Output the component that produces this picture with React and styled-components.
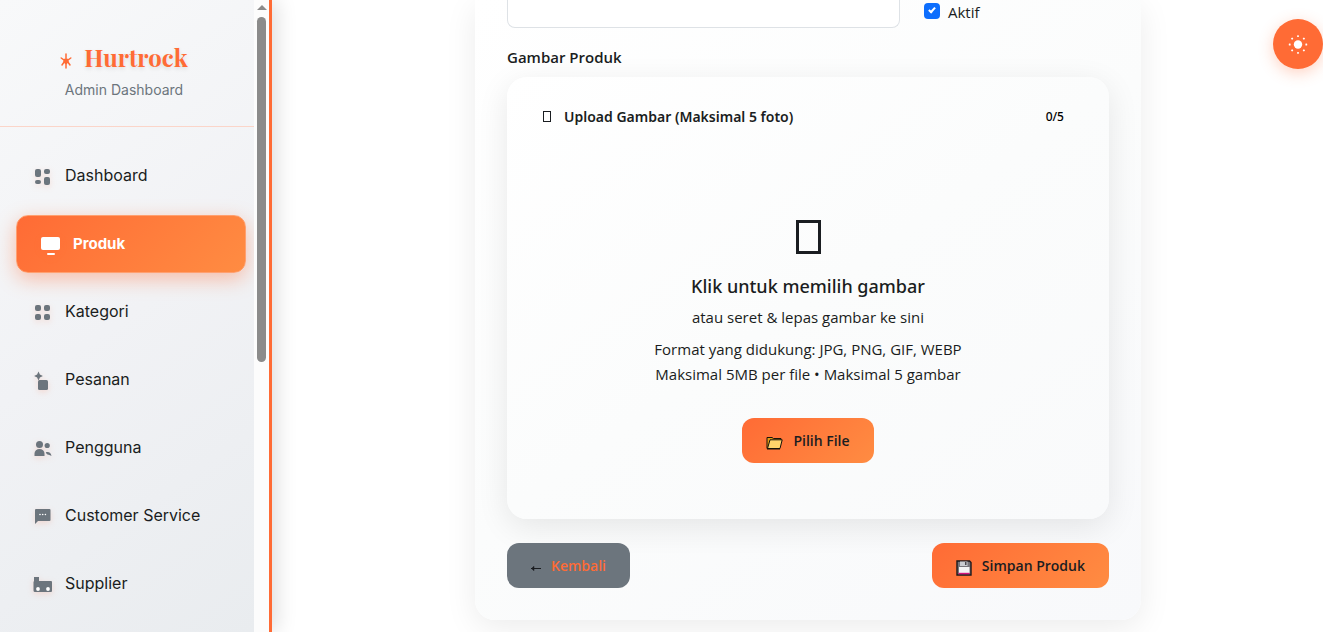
import React from "react";
import styled, { createGlobalStyle } from "styled-components";

const GlobalStyle = createGlobalStyle`
  *, *::before, *::after { box-sizing: border-box; }
  body {
    margin: 0;
    background: #fff;
    color: #1a1d21;
    font-family: "Open Sans", "Noto Sans", sans-serif;
    font-size: 15px;
  }
`;

const Page = styled.div`
  display: flex;
  min-height: 100vh;
`;

const Sidebar = styled.aside`
  position: sticky;
  top: 0;
  display: flex;
  flex: none;
  width: 272px;
  height: 100vh;
  overflow: visible;
  border-right: 3px solid #ff6b35;
  box-shadow: 4px 0 20px rgba(0, 0, 0, 0.14);
  font-family: Inter, sans-serif;
`;

const SidebarContent = styled.div`
  flex: 1;
  overflow: hidden;
  background: linear-gradient(145deg, #f8f9fa 0%, #f1f2f5 50%, #e9ecef 100%);
`;

const Brand = styled.header`
  display: flex;
  flex-direction: column;
  align-items: center;
  gap: 2px;
  height: 127px;
  padding: 38px 6px 0 0;
  border-bottom: 1px solid #fbd5c9;
`;

const BrandName = styled.h1`
  display: flex;
  align-items: center;
  gap: 12px;
  margin: 0;
  color: #ff6b35;
  font-family: "Playfair Display", "Liberation Serif", serif;
  font-size: 24px;
  font-weight: 700;
  line-height: 38px;
  text-shadow: 0 2px 4px rgba(0, 0, 0, 0.1);

  svg {
    position: relative;
    top: 4px;
  }
`;

const BrandCaption = styled.p`
  margin: 0;
  color: #6c757d;
  font-size: 14px;
  line-height: 24px;
`;

const Nav = styled.nav`
  display: flex;
  flex-direction: column;
  gap: 10px;
  padding: 20px 8px 20px 16px;
`;

const NavLink = styled.a`
  display: flex;
  align-items: center;
  gap: 12px;
  height: 58px;
  padding: 0 ${(p) => (p.$active ? "24px" : "16px")} 2px;
  border: 1px solid ${(p) => (p.$active ? "#ffa070" : "transparent")};
  border-radius: 12px;
  background: ${(p) => (p.$active ? "linear-gradient(135deg, #ff6b35, #ff8c42)" : "none")};
  box-shadow: ${(p) => (p.$active ? "0 6px 20px rgba(255, 107, 53, 0.4)" : "none")};
  color: ${(p) => (p.$active ? "#fff" : "#1a1d21")};
  font-size: ${(p) => (p.$active ? "15px" : "16px")};
  font-weight: ${(p) => (p.$active ? 700 : 400)};
  text-decoration: none;

  svg {
    position: relative;
    top: 2px;
    flex: none;
    color: ${(p) => (p.$active ? "#fff" : "#6c757d")};
    filter: drop-shadow(0 2px 3px rgba(255, 107, 53, 0.18));
  }
`;

const ScrollTrack = styled.div`
  display: flex;
  flex: none;
  flex-direction: column;
  align-items: center;
  gap: 7px;
  width: 15px;
  padding-top: 5px;
  background: #fcfcfc;
`;

const ScrollArrow = styled.span`
  border: 5px solid transparent;
  border-top: 0;
  border-bottom-color: #8b8b8b;
`;

const ScrollThumb = styled.span`
  width: 9px;
  height: 345px;
  border-radius: 5px;
  background: #8b8b8b;
`;

const Main = styled.main`
  display: flex;
  flex: 1;
  justify-content: center;
  align-items: flex-start;
  min-width: 0;
  padding: 0 0 12px 21px;
`;

const FormCard = styled.form`
  width: 100%;
  max-width: 666px;
  padding: 0 32px 32px;
  border-radius: 0 0 20px 20px;
  background: linear-gradient(145deg, #fff 0%, #fbfcfc 50%, #f8f9fb 100%);
  box-shadow: 0 8px 32px rgba(0, 0, 0, 0.08);
`;

const FieldRow = styled.div`
  display: grid;
  grid-template-columns: 393px 1fr;
  gap: 24px;
`;

const Description = styled.textarea`
  display: block;
  width: 100%;
  height: 28px;
  padding: 0 12px;
  border: 1px solid #dee2e6;
  border-top: 0;
  border-radius: 0 0 8px 8px;
  background: #fff;
  resize: none;
`;

const CheckLabel = styled.label`
  display: flex;
  align-items: center;
  gap: 8px;
  height: 24px;
`;

const CheckInput = styled.input`
  width: 16px;
  height: 16px;
  margin: 0 0 2px;
  appearance: none;
  border-radius: 4px;
  background: #0d6efd;

  &::after {
    content: "";
    display: block;
    width: 4px;
    height: 7px;
    margin: 3px 6px;
    border: solid #fff;
    border-width: 0 2px 2px 0;
    transform: rotate(42deg);
  }
`;

const SectionLabel = styled.h2`
  margin: 17px 0 8px;
  font-size: 15px;
  font-weight: 600;
  line-height: 24px;
`;

const UploadBox = styled.section`
  padding: 24px 36px 56px;
  border-radius: 20px;
  background: linear-gradient(145deg, #fff 0%, #fbfcfc 50%, #f9fafb 100%);
  box-shadow: 0 8px 32px rgba(0, 0, 0, 0.09);
`;

const UploadHeader = styled.header`
  display: flex;
  align-items: center;
  justify-content: space-between;
  height: 30px;
`;

const UploadTitle = styled.h3`
  display: flex;
  align-items: center;
  gap: 13px;
  margin: 0;
  font-family: "Noto Sans", sans-serif;
  font-size: 14px;
  font-weight: 600;
`;

const GlyphBox = styled.span`
  flex: none;
  width: ${(p) => (p.$large ? "25px" : "8px")};
  height: ${(p) => (p.$large ? "34px" : "11px")};
  border: ${(p) => (p.$large ? "3px" : "1px")} solid #1a1d21;
`;

const Counter = styled.span`
  padding: 0 9px;
  color: #000;
  font-family: "Noto Sans", sans-serif;
  font-size: 12px;
  font-weight: 500;
`;

const DropZone = styled.div`
  display: flex;
  flex-direction: column;
  align-items: center;
  padding-top: 74px;
  text-align: center;
`;

const DropIcon = styled.div`
  display: flex;
  align-items: center;
  height: 64px;
`;

const DropTitle = styled.h4`
  margin: 3px 0 5px;
  font-family: "Noto Sans", sans-serif;
  font-size: 18px;
  font-weight: 500;
  line-height: 28px;
`;

const DropText = styled.p`
  margin: 0 0 8px;
  font-size: 15px;
  line-height: 24px;
`;

const DropHint = styled.p`
  margin: 0 0 31px;
  font-size: 15px;
  line-height: 25px;
`;

const Button = styled.button`
  display: inline-flex;
  align-items: center;
  justify-content: center;
  gap: 10px;
  height: 45px;
  padding: 0 24px;
  border: 0;
  border-radius: 12px;
  background: ${(p) => (p.$muted ? "#6c757d" : "linear-gradient(135deg, #ff6b35, #ff8c42)")};
  color: ${(p) => (p.$muted ? "#ff6b35" : "#1a1d21")};
  font: 600 14px "Open Sans", "Noto Sans", sans-serif;
  text-decoration: none;

  svg {
    position: relative;
    top: 2px;
    flex: none;
  }
`;

const Actions = styled.footer`
  display: flex;
  justify-content: space-between;
  margin-top: 24px;
`;

const ThemeToggle = styled.button`
  position: fixed;
  top: 19px;
  right: 0;
  display: grid;
  place-items: center;
  width: 50px;
  height: 50px;
  padding: 0;
  border: 0;
  border-radius: 50%;
  background: #ff6b35;
  box-shadow: 0 4px 15px rgba(255, 107, 53, 0.3);
  color: #fff;
`;

const icons = {
  dashboard: (
    <>
      <rect x="2" y="2" width="6" height="8" rx="2" />
      <rect x="11" y="2" width="6" height="5" rx="2" />
      <rect x="2" y="13" width="6" height="4" rx="2" />
      <rect x="11" y="10" width="6" height="8" rx="2" />
    </>
  ),
  product: (
    <>
      <rect x="0" y="2" width="19" height="13" rx="2" />
      <rect x="6" y="18" width="8" height="2" rx="1" />
    </>
  ),
  category: (
    <>
      <rect x="2" y="2" width="6" height="6" rx="2" />
      <rect x="11" y="2" width="6" height="6" rx="2" />
      <rect x="2" y="11" width="6" height="6" rx="2" />
      <rect x="11" y="11" width="6" height="6" rx="2" />
    </>
  ),
  order: (
    <>
      <path d="M5.500 .6 L6.900 3.600 L9.900 5 L6.900 6.400 L5.500 9.400 L4.100 6.400 L1.100 5 L4.100 3.600Z" />
      <rect x="5" y="9" width="10" height="10" rx="1.500" />
    </>
  ),
  users: (
    <>
      <circle cx="6.500" cy="5.500" r="3.500" />
      <path d="M1.500 17v-2.500a5 4.500 0 0 1 10 0V17Z" />
      <circle cx="14.200" cy="6.500" r="2.600" />
      <path d="M12.800 13.200c3-1 5.200.5 5.700 3.800-1-.6-2-1-3-1.300-1.500-.3-2.200-1-2.700-2.500Z" />
    </>
  ),
  chat: (
    <>
      <path d="M3 2h13.500a1 1 0 0 1 1 1v10a1 1 0 0 1-1 1H5l-3 3V3a1 1 0 0 1 1-1Z" />
      <g fill="#fff">
        <circle cx="7" cy="7.500" r=".8" />
        <circle cx="9.700" cy="7.500" r=".8" />
        <circle cx="12.400" cy="7.500" r=".8" />
      </g>
    </>
  ),
  supplier: (
    <>
      <path d="M1 2h5v4h12a1 1 0 0 1 1 1v9a1 1 0 0 1-1 1H2a1.500 1.500 0 0 1-1.500-1.500V7L1 6Z" />
      <circle cx="5" cy="14" r="1.900" fill="#fff" />
      <circle cx="15" cy="14" r="1.900" fill="#fff" />
    </>
  ),
};

const navItems = [
  { label: "Dashboard", icon: "dashboard" },
  { label: "Produk", icon: "product", active: true },
  { label: "Kategori", icon: "category" },
  { label: "Pesanan", icon: "order" },
  { label: "Pengguna", icon: "users" },
  { label: "Customer Service", icon: "chat" },
  { label: "Supplier", icon: "supplier" },
];

function NavIcon({ name }) {
  return (
    <svg width="20" height="20" viewBox="0 0 20 20" fill="currentColor" aria-hidden="true">
      {icons[name]}
    </svg>
  );
}

function BrandMark() {
  return (
    <svg width="12" height="18" viewBox="0 0 12 18" fill="none" stroke="#ff6b35" strokeWidth="1.500" strokeLinecap="round" aria-hidden="true">
      <path d="M6 2v14M1.200 6 4 8l4 0 2.800-2M2 13l2.500-3.500M10 13 7.500 9.500" />
      <path d="M4.500 7.500h3L8 10l-2 1.500L4 10Z" fill="#ff6b35" />
    </svg>
  );
}

function FolderIcon() {
  return (
    <svg width="17" height="14" viewBox="0 0 17 14" stroke="#17130b" strokeWidth="1" strokeLinejoin="round" aria-hidden="true">
      <path d="M1 12.500V1.500h5l1.500 1H15v3" fill="#e69a13" />
      <path d="M4 3.800h12.200L14 12.500H1.500Z" fill="#ffd36b" />
      <path d="M1 12.800h13" strokeWidth="1.400" />
    </svg>
  );
}

function DiskIcon() {
  return (
    <svg width="16" height="16" viewBox="0 0 16 16" aria-hidden="true">
      <path d="M1 1h12.500L15 2.500V15H1Z" fill="#77757b" stroke="#1c191b" strokeWidth="1.400" />
      <path d="M4 1.500h7.500V6H4Z" fill="#c9cbd0" />
      <path d="M9 2h1.500v3H9Z" fill="#4a484d" />
      <path d="M3 7h10.500v6H3Z" fill="#f3f3f4" />
      <path d="M2.500 12.800h11v1.500h-11Z" fill="#d6157c" />
    </svg>
  );
}

function ArrowIcon() {
  return (
    <svg width="10" height="8" viewBox="0 0 10 8" fill="none" stroke="#1a1d21" aria-hidden="true">
      <path d="M0 4.500h10" />
      <path d="M3 2.300 .5 4.500 3 6.700Z" fill="#1a1d21" strokeWidth=".5" />
    </svg>
  );
}

function SunIcon() {
  return (
    <svg width="20" height="20" viewBox="0 0 20 20" fill="currentColor" aria-hidden="true">
      <circle cx="10" cy="10.500" r="4.200" />
      {[0, 45, 90, 135, 180, 225, 270, 315].map((angle) => (
        <rect key={angle} x="9.100" y="1.300" width="1.800" height="1.800" rx=".5" transform={`rotate(${angle} 10 10.500)`} />
      ))}
    </svg>
  );
}

export default function App() {
  return (
    <>
      <GlobalStyle />
      <Page>
        <Sidebar>
          <SidebarContent>
            <Brand>
              <BrandName>
                <BrandMark />
                Hurtrock
              </BrandName>
              <BrandCaption>Admin Dashboard</BrandCaption>
            </Brand>
            <Nav aria-label="Admin">
              {navItems.map((item) => (
                <NavLink key={item.label} href="#" $active={item.active} aria-current={item.active ? "page" : undefined}>
                  <NavIcon name={item.icon} />
                  {item.label}
                </NavLink>
              ))}
            </Nav>
          </SidebarContent>
          <ScrollTrack aria-hidden="true">
            <ScrollArrow />
            <ScrollThumb />
          </ScrollTrack>
        </Sidebar>

        <Main>
          <FormCard onSubmit={(e) => e.preventDefault()}>
            <FieldRow>
              <Description aria-label="Deskripsi" />
              <CheckLabel>
                <CheckInput type="checkbox" defaultChecked />
                Aktif
              </CheckLabel>
            </FieldRow>

            <SectionLabel>Gambar Produk</SectionLabel>
            <UploadBox>
              <UploadHeader>
                <UploadTitle>
                  <GlyphBox />
                  Upload Gambar (Maksimal 5 foto)
                </UploadTitle>
                <Counter>0/5</Counter>
              </UploadHeader>
              <DropZone>
                <DropIcon>
                  <GlyphBox $large />
                </DropIcon>
                <DropTitle>Klik untuk memilih gambar</DropTitle>
                <DropText>atau seret &amp; lepas gambar ke sini</DropText>
                <DropHint>
                  Format yang didukung: JPG, PNG, GIF, WEBP
                  <br />
                  Maksimal 5MB per file • Maksimal 5 gambar
                </DropHint>
                <Button type="button">
                  <FolderIcon />
                  Pilih File
                </Button>
              </DropZone>
            </UploadBox>

            <Actions>
              <Button as="a" href="#" $muted>
                <ArrowIcon />
                Kembali
              </Button>
              <Button type="submit">
                <DiskIcon />
                Simpan Produk
              </Button>
            </Actions>
          </FormCard>
        </Main>
      </Page>
      <ThemeToggle type="button" aria-label="Ganti tema">
        <SunIcon />
      </ThemeToggle>
    </>
  );
}
